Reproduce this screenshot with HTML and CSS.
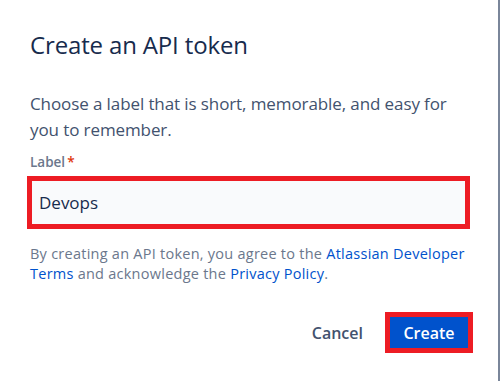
FILE: index.html
```html
<!DOCTYPE html>
<html lang="en">
<head>
    <meta charset="UTF-8">
    <meta name="viewport" content="width=device-width, initial-scale=1.0">
    <title>Create an API token</title>
    <link rel="stylesheet" href="styles.css">
</head>
<body>
    <div class="dialog">
        <h1>Create an API token</h1>

        <p class="intro">Choose a label that is short, memorable, and easy for you to remember.</p>

        <div class="field">
            <label for="label">Label<span class="required">*</span></label>
            <div class="input-wrap">
                <input type="text" id="label" value="Devops">
            </div>
        </div>

        <p class="terms">
            By creating an API token, you agree to the <a href="#">Atlassian Developer</a>
            <a href="#">Terms</a> and acknowledge the <a href="#">Privacy Policy</a>.
        </p>

        <div class="actions">
            <button class="btn btn-subtle">Cancel</button>
            <div class="btn-wrap">
                <button class="btn btn-primary">Create</button>
            </div>
        </div>
    </div>
</body>
</html>
```

FILE: styles.css
```css
* {
    margin: 0;
    padding: 0;
    box-sizing: border-box;
}

body {
    background: #fff;
    color: #172b4d;
    font-family: "Open Sans", "Noto Sans", sans-serif;
}

.dialog {
    width: 500px;
    height: 381px;
    padding: 29px 25px 0 30px;
    border-right: 2px solid #7a869a;
}

h1 {
    font-size: 24px;
    font-weight: 400;
    line-height: 32px;
    color: #172b4d;
    letter-spacing: -0.15px;
}

.intro {
    margin-top: 30px;
    font-size: 17px;
    line-height: 26px;
    color: #42526e;
    letter-spacing: -0.1px;
    padding-right: 20px;
}

.field {
    margin-top: 10px;
}

.field label {
    display: block;
    font-size: 13.5px;
    font-weight: 600;
    line-height: 18px;
    color: #6b778c;
}

.required {
    color: #de350b;
    margin-left: 2px;
}

.input-wrap {
    margin-top: 5px;
    margin-left: -3px;
    width: 443px;
    border: 5px solid #ed1c24;
}

.input-wrap input {
    display: block;
    width: 100%;
    height: 43px;
    border: none;
    outline: none;
    background: #f9fafc;
    padding: 0 7px;
    font-family: inherit;
    font-size: 17px;
    color: #172b4d;
}

.terms {
    margin-top: 15px;
    font-size: 14.5px;
    line-height: 20px;
    color: #6b778c;
    letter-spacing: 0.25px;
}

.terms a {
    color: #0052cc;
    text-decoration: none;
}

.actions {
    margin-top: 28px;
    display: flex;
    justify-content: flex-end;
    align-items: center;
    gap: 22px;
}

.btn {
    border: none;
    background: none;
    font-family: inherit;
    font-size: 16px;
    font-weight: 600;
    cursor: pointer;
}

.btn-subtle {
    color: #42526e;
}

.btn-wrap {
    border: 5px solid #ed1c24;
}

.btn-primary {
    display: block;
    width: 78px;
    height: 31px;
    background: #0052cc;
    color: #fff;
}
```
